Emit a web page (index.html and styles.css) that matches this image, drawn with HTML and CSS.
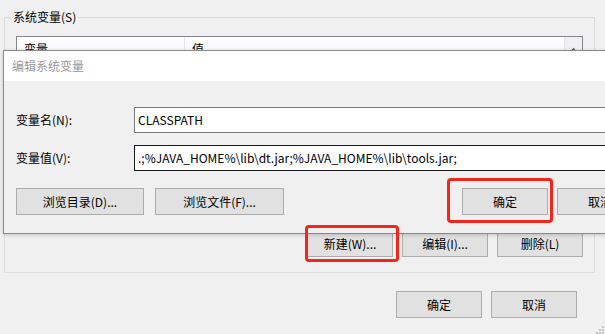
FILE: index.html
```html
<!DOCTYPE html>
<html lang="zh-CN">
<head>
<meta charset="utf-8">
<title>编辑系统变量</title>
<link rel="stylesheet" href="styles.css">
</head>
<body>
<div class="window">
  <fieldset class="group">
    <legend class="group-label">系统变量(S)</legend>
    <div class="list">
      <div class="list-main">
        <div class="list-head">
          <div class="col col-name">变量</div>
          <div class="col col-value">值</div>
        </div>
      </div>
      <div class="scrollbar">
        <div class="scroll-up">
          <svg width="9" height="6" viewBox="0 0 9 6"><path d="M1 5.5 L4.5 2 L8 5.5" fill="none" stroke="#606060" stroke-width="1.6"/></svg>
        </div>
      </div>
    </div>
    <div class="row-buttons">
      <button class="btn">新建(W)...</button>
      <button class="btn">编辑(I)...</button>
      <button class="btn">删除(L)</button>
    </div>
  </fieldset>
  <div class="footer">
    <button class="btn">确定</button>
    <button class="btn">取消</button>
  </div>
</div>

<svg class="grip" width="9" height="9" viewBox="0 0 9 9">
  <rect x="7" y="1" width="2" height="2" fill="#c4c4c4"/>
  <rect x="4" y="4" width="2" height="2" fill="#c4c4c4"/>
  <rect x="7" y="4" width="2" height="2" fill="#c4c4c4"/>
  <rect x="1" y="7" width="2" height="2" fill="#c4c4c4"/>
  <rect x="4" y="7" width="2" height="2" fill="#c4c4c4"/>
  <rect x="7" y="7" width="2" height="2" fill="#c4c4c4"/>
</svg>

<div class="dialog">
  <div class="dialog-title">编辑系统变量</div>
  <div class="dialog-body">
    <div class="fields">
      <label class="field-label">变量名(N):</label>
      <div class="input">CLASSPATH</div>
      <label class="field-label">变量值(V):</label>
      <div class="input input-focus">.;%JAVA_HOME%\lib\dt.jar;%JAVA_HOME%\lib\tools.jar;</div>
    </div>
    <div class="dialog-buttons">
      <button class="btn btn-browse-dir">浏览目录(D)...</button>
      <button class="btn btn-browse-file">浏览文件(F)...</button>
      <button class="btn btn-ok">确定</button>
      <button class="btn">取消</button>
    </div>
  </div>
</div>

<div class="mark mark-ok"></div>
<div class="mark mark-new"></div>
</body>
</html>
```

FILE: styles.css
```css
* { box-sizing: border-box; }

html, body {
  margin: 0;
  width: 605px;
  height: 334px;
  overflow: hidden;
}

body {
  position: relative;
  background: #f0f0f0;
  color: #000;
  font-family: "Noto Sans CJK SC", "Noto Sans", sans-serif;
  font-size: 12px;
  line-height: 16px;
}

.window {
  padding: 9px 0 0 4px;
}

.group {
  width: 591px;
  margin: 0;
  padding: 11px 11px 15px 11px;
  border: 1px solid #dcdcdc;
  min-width: 0;
}

.group-label {
  padding: 0 2px;
  margin-left: -5px;
  line-height: 16px;
}

.list {
  display: flex;
  height: 185px;
  border: 1px solid #828790;
  background: #fff;
}

.list-main {
  flex: 1;
}

.list-head {
  display: flex;
  height: 24px;
  background: linear-gradient(#ffffff, #f2f2f2);
  border-bottom: 1px solid #e5e5e5;
}

.col {
  padding: 4px 0 0 7px;
}

.col-name {
  width: 168px;
  border-right: 1px solid #e5e5e5;
}

.scrollbar {
  width: 18px;
  background: #f0f0f0;
  border-left: 1px solid #e6e6e6;
}

.scroll-up {
  height: 17px;
  display: flex;
  align-items: flex-end;
  justify-content: center;
  padding-bottom: 1px;
}

.row-buttons {
  display: flex;
  justify-content: flex-end;
  gap: 9px;
  margin-top: 9px;
}

.btn {
  width: 86px;
  height: 27px;
  padding: 0;
  margin: 0;
  background: #e1e1e1;
  border: 1px solid #adadad;
  border-radius: 0;
  color: #000;
  font-family: inherit;
  font-size: 12px;
  line-height: 16px;
}

.footer {
  display: flex;
  justify-content: flex-end;
  gap: 9px;
  margin-top: 18px;
  padding-right: 28px;
}

.grip {
  position: absolute;
  right: 1px;
  bottom: 0;
}

.dialog {
  position: absolute;
  left: 3px;
  top: 50px;
  width: 652px;
  height: 184px;
  background: #f0f0f0;
  border: 1px solid #8a8a8a;
  box-shadow: 0 1px 4px rgba(0, 0, 0, 0.18);
}

.dialog-title {
  height: 30px;
  line-height: 30px;
  padding-left: 8px;
  background: #fff;
  color: #9a9a9a;
}

.dialog-body {
  padding: 26px 11px 0 12px;
}

.fields {
  display: grid;
  grid-template-columns: 118px 1fr;
  row-gap: 12px;
  align-items: center;
}

.field-label {
  padding-left: 0;
}

.input {
  height: 26px;
  line-height: 24px;
  padding-left: 3px;
  background: #fff;
  border: 1px solid #7a7a7a;
  white-space: nowrap;
  overflow: hidden;
}

.input-focus {
  border-color: #1a1a1a;
}

.dialog-buttons {
  display: flex;
  gap: 9px;
  margin-top: 17px;
}

.btn-browse-dir {
  width: 128px;
}

.btn-browse-file {
  width: 129px;
  margin-left: 2px;
}

.btn-ok {
  margin-left: auto;
}

.mark {
  position: absolute;
  border: 3px solid #f3261c;
  border-radius: 4px;
}

.mark-ok {
  left: 447px;
  top: 178px;
  width: 106px;
  height: 45px;
}

.mark-new {
  left: 305px;
  top: 225px;
  width: 94px;
  height: 37px;
}
```
